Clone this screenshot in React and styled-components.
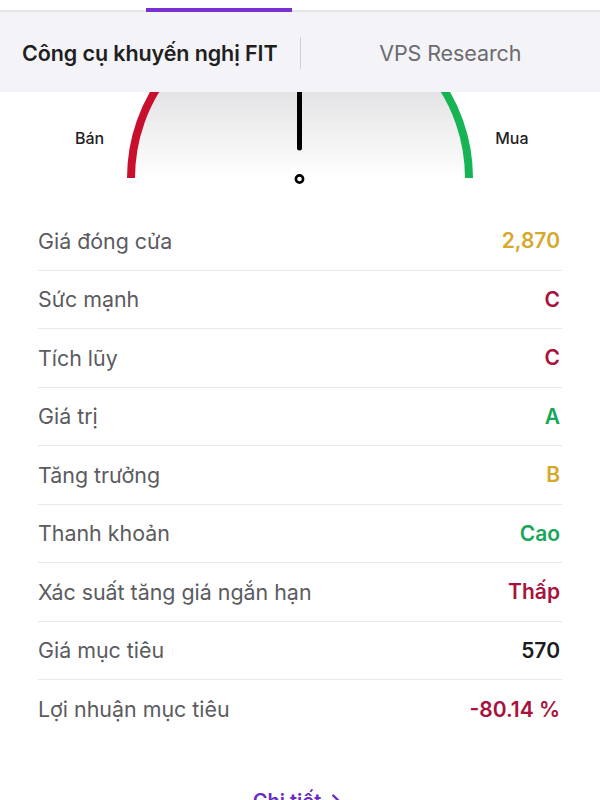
import React from 'react';
import styled, { createGlobalStyle } from 'styled-components';
import { ChevronRight } from 'lucide-react';

const GlobalStyle = createGlobalStyle`
  body {
    margin: 0;
    background: #ffffff;
    font-family: 'Inter', 'Roboto', sans-serif;
  }
`;

const COLORS = {
  yellow: '#d6a92c',
  red: '#a8123c',
  green: '#17a65a',
  dark: '#1c1c1e',
};

const rows = [
  { label: 'Giá đóng cửa', value: '2,870', tone: 'yellow' },
  { label: 'Sức mạnh', value: 'C', tone: 'red' },
  { label: 'Tích lũy', value: 'C', tone: 'red' },
  { label: 'Giá trị', value: 'A', tone: 'green' },
  { label: 'Tăng trưởng', value: 'B', tone: 'yellow' },
  { label: 'Thanh khoản', value: 'Cao', tone: 'green' },
  { label: 'Xác suất tăng giá ngắn hạn', value: 'Thấp', tone: 'red' },
  { label: 'Giá mục tiêu', value: '570', tone: 'dark' },
  { label: 'Lợi nhuận mục tiêu', value: '-80.14 %', tone: 'red' },
];

const App = () => {
  return (
    <>
      <GlobalStyle />
      <Page>
        <TopStrip>
          <Indicator />
        </TopStrip>
        <TabBar>
          <Tab active>Công cụ khuyến nghị FIT</Tab>
          <TabDivider />
          <Tab>VPS Research</Tab>
        </TabBar>

        <Gauge>
          <GaugeLabel>Bán</GaugeLabel>
          <GaugeDial />
          <GaugeLabel>Mua</GaugeLabel>
        </Gauge>

        <List>
          {rows.map(r => (
            <Row key={r.label}>
              <Label>{r.label}</Label>
              <Value tone={r.tone}>{r.value}</Value>
            </Row>
          ))}
        </List>

        <More>
          Chi tiết
          <ChevronRight size={22} strokeWidth={2.6} />
        </More>
      </Page>
    </>
  );
};

// vẽ đồng hồ: tâm (174, 86), bán kính 169
const GaugeDial = () => (
  <Dial width="350" height="100" viewBox="0 0 350 100">
    <defs>
      <linearGradient id="dialFill" x1="0" y1="0" x2="0" y2="88" gradientUnits="userSpaceOnUse">
        <stop offset="0" stopColor="#e4e4e6" />
        <stop offset="1" stopColor="#ffffff" />
      </linearGradient>
    </defs>
    <path d="M 5 86 A 169 169 0 0 1 343 86 Z" fill="url(#dialFill)" />
    <path
      d="M 5 86 A 169 169 0 0 1 42.4 -20"
      fill="none"
      stroke="#c8102e"
      strokeWidth="8"
    />
    <path
      d="M 343 86 A 169 169 0 0 0 305.6 -20"
      fill="none"
      stroke="#16b455"
      strokeWidth="8"
    />
    <line
      x1="173.5"
      y1="-10"
      x2="173.5"
      y2="56"
      stroke="#000"
      strokeWidth="5"
      strokeLinecap="round"
    />
    <circle cx="173.5" cy="87" r="3.6" fill="#fff" stroke="#000" strokeWidth="2.6" />
  </Dial>
);

export default App;

const Page = styled.div`
  width: 600px;
  height: 800px;
  overflow: hidden;
  background: #fff;
`;

const TopStrip = styled.div`
  box-sizing: border-box;
  height: 12px;
  padding-left: 146px;
  display: flex;
  align-items: flex-end;
  background: #fff;
  border-bottom: 2px solid #e6e5eb;
`;

const Indicator = styled.div`
  width: 146px;
  height: 4px;
  margin-bottom: -2px;
  background: #7a30cf;
`;

const TabBar = styled.div`
  height: 80px;
  display: grid;
  grid-template-columns: 1fr auto 1fr;
  align-items: center;
  background: #f4f3f8;
`;

const Tab = styled.div`
  text-align: center;
  font-size: 21.5px;
  letter-spacing: -0.1px;
  font-weight: ${p => (p.active ? 600 : 400)};
  color: ${p => (p.active ? '#1f1f21' : '#6b6b70')};
  padding-top: 2px;
`;

const TabDivider = styled.div`
  width: 1px;
  height: 32px;
  background: #cfcfd4;
  margin-top: 2px;
`;

const Gauge = styled.div`
  height: 100px;
  display: flex;
  align-items: center;
  padding-left: 75px;
`;

const GaugeLabel = styled.div`
  font-size: 16px;
  font-weight: 500;
  color: #222;
  margin-bottom: 8px;

  &:last-child {
    margin-left: 19px;
  }
`;

const Dial = styled.svg`
  display: block;
  margin-left: 22px;
  flex: none;
`;

const List = styled.div`
  margin-top: 20px;
  padding: 0 38px;
`;

const Row = styled.div`
  box-sizing: border-box;
  height: 58.5px;
  display: flex;
  align-items: center;
  justify-content: space-between;
  border-bottom: 1px solid #e9e9ec;

  &:last-child {
    border-bottom: none;
  }
`;

const Label = styled.div`
  font-size: 21.4px;
  color: #5b5b60;
`;

const Value = styled.div`
  font-size: 21px;
  font-weight: 600;
  padding-right: 2px;
  color: ${p => COLORS[p.tone]};
`;

const More = styled.div`
  margin-top: 50px;
  display: flex;
  align-items: center;
  justify-content: center;
  gap: 4px;
  font-size: 20px;
  font-weight: 600;
  color: #6a2ec0;
`;
